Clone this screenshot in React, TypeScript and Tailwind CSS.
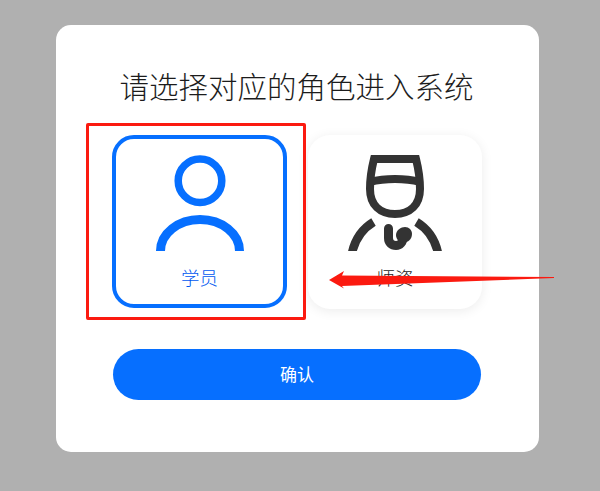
import React from 'react';

const cjk = 'font-["Microsoft_YaHei","Noto_Sans_CJK_SC",sans-serif]';

function StudentIcon() {
  return (
    <svg width="100" height="98" viewBox="0 0 100 98" className="block">
      <circle cx="50" cy="27.7" r="21.8" fill="none" stroke="#066fff" strokeWidth="7.5" />
      <path d="M10.5 98 A39.5 31.5 0 0 1 89.5 98" fill="none" stroke="#066fff" strokeWidth="9" />
    </svg>
  );
}

function TeacherIcon() {
  return (
    <svg width="100" height="98" viewBox="0 0 100 98" className="block">
      <g fill="none" stroke="#333333" strokeWidth="8">
        <path d="M29 6 L71 6 C73.5 16 75 27 75 36 C75 52 65 61 50 61 C35 61 25 52 25 36 C25 27 26.5 16 29 6 Z" />
        <path d="M25 29 C40 25 60 25 75 29" />
        <path d="M7 100 C10 86 17 76 28.5 69" strokeWidth="8.5" />
        <path d="M93 100 C90 86 83 76 71.5 69" strokeWidth="8.5" />
      </g>
      <path d="M43.5 75.5 L43.5 85 C43.5 90 47 92.5 51 92.5 C55 92.5 58 89 58 85" fill="none" stroke="#333333" strokeWidth="9" strokeLinecap="round" />
      <path d="M51 82 C51 77 56 74 60 74 C64 74 67 77 67 81 C67 86 63 89.5 58.5 89.5 C54 89.5 51 86 51 82 Z" fill="#333333" />
    </svg>
  );
}

export default function App() {
  return (
    <div className={`relative h-[491px] w-[600px] overflow-hidden bg-[#b0b0b0] pt-[25px] pl-[56px] ${cjk}`}>
      <div className="h-[427px] w-[483px] rounded-[15px] bg-white pt-[40px]">
        <h1 className="pr-[2px] text-center text-[29.5px] leading-[40px] font-light text-[#1c1c1c]">请选择对应的角色进入系统</h1>

        <div className="mt-[30px] ml-[56px] flex gap-[21px]">
          <div className="flex h-[173px] w-[175px] flex-col items-center rounded-[22px] border-4 border-[#066fff] pt-[14px]">
            <StudentIcon />
            <span className="mt-[13px] text-[18.5px] leading-[26px] font-light text-[#0058f0]">学员</span>
          </div>
          <div className="flex h-[174px] w-[174px] flex-col items-center rounded-[22px] bg-white pt-[18px] shadow-[0_2px_12px_rgba(0,0,0,0.08)]">
            <TeacherIcon />
            <span className="mt-[13px] text-[18.5px] leading-[26px] font-light text-[#1c1c1c]">师资</span>
          </div>
        </div>

        <button className="mt-[40px] ml-[57px] block h-[51px] w-[368px] rounded-full bg-[#066fff] pb-[2px] text-[17px] text-white">确认</button>
      </div>

      {/* annotations on top of the screenshot */}
      <div className="absolute top-[123px] left-[86px] h-[197px] w-[220px] rounded-[2px] border-[3px] border-[#fb1a10]" />
      <svg className="absolute top-0 left-0" width="600" height="491" viewBox="0 0 600 491">
        <polygon points="329,280 344,271 342,275.5 554,277 554,278 342,286 344,288.5" fill="#fb1a10" />
      </svg>
    </div>
  );
}
